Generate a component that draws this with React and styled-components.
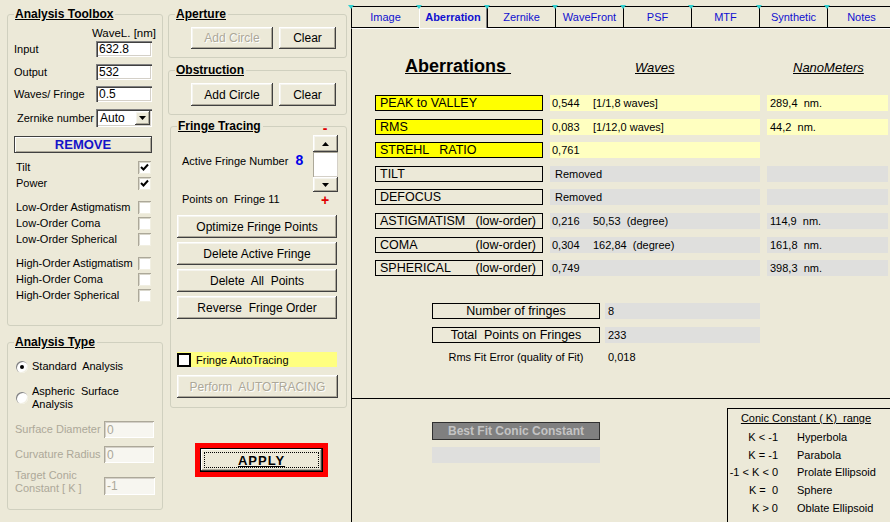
import React from 'react';
import styled, { createGlobalStyle, css } from 'styled-components';

const BG = '#ECE9D8';
const FONT = '"Liberation Sans", Arial, sans-serif';

const sunken = css`
    box-shadow: inset 1px 1px #808080, inset 2px 2px #404040, inset -1px -1px #FFFFFF, inset -2px -2px #D4D0C8;
`;

const raised = css`
    box-shadow: inset -1px -1px #404040, inset 1px 1px #FFFFFF, inset -2px -2px #ACA899, inset 2px 2px #F5F4EE;
`;

const GlobalStyle = createGlobalStyle`
    html, body { margin: 0; padding: 0; background: ${BG}; }
    body { font-family: ${FONT}; font-size: 11px; color: #000; }
    *, *::before, *::after { box-sizing: border-box; }
`;

const toolboxChecks = [
    [['Tilt', true], ['Power', true]],
    [['Low-Order Astigmatism', false], ['Low-Order Coma', false], ['Low-Order Spherical', false]],
    [['High-Order Astigmatism', false], ['High-Order Coma', false], ['High-Order Spherical', false]]
];

const aberrations = [
    { label: 'PEAK to VALLEY', hi: true, wave: '0,544', extra: '[1/1,8 waves]', nm: '289,4  nm.', waveTone: 'yellow', nmTone: 'yellow' },
    { label: 'RMS', hi: true, wave: '0,083', extra: '[1/12,0 waves]', nm: '44,2  nm.', waveTone: 'yellow', nmTone: 'yellow' },
    { label: 'STREHL   RATIO', hi: true, wave: '0,761', waveTone: 'yellow', nmTone: 'none' },
    { label: 'TILT', wave: 'Removed', removed: true, waveTone: 'grey', nmTone: 'grey' },
    { label: 'DEFOCUS', wave: 'Removed', removed: true, waveTone: 'grey', nmTone: 'grey' },
    { label: 'ASTIGMATISM', suffix: '(low-order)', wave: '0,216', extra: '50,53  (degree)', nm: '114,9  nm.', waveTone: 'grey', nmTone: 'grey' },
    { label: 'COMA', suffix: '(low-order)', wave: '0,304', extra: '162,84  (degree)', nm: '161,8  nm.', waveTone: 'grey', nmTone: 'grey' },
    { label: 'SPHERICAL', suffix: '(low-order)', wave: '0,749', nm: '398,3  nm.', waveTone: 'grey', nmTone: 'grey' }
];

const conicRanges = [
    ['K < -1', 'Hyperbola'],
    ['K = -1', 'Parabola'],
    ['-1 < K < 0', 'Prolate Ellipsoid'],
    ['K =  0', 'Sphere'],
    ['K > 0', 'Oblate Ellipsoid']
];

const tabs = ['Image', 'Aberration', 'Zernike', 'WaveFront', 'PSF', 'MTF', 'Synthetic', 'Notes'];

const CheckMark = () => (
    <svg width="9" height="9" viewBox="0 0 9 9">
        <path d="M1 4 L3.5 6.5 L8 1.5" fill="none" stroke="#000" strokeWidth="2" />
    </svg>
);

const Arrow = ({ up }) => (
    <svg width="7" height="4" viewBox="0 0 7 4">
        <path d={up ? 'M0 4 L3.5 0 L7 4 Z' : 'M0 0 L7 0 L3.5 4 Z'} fill="#000" />
    </svg>
);

const App = () => (
    <>
        <GlobalStyle />
        <Screen>
            <LeftColumn>
                <Group $h={312}>
                    <GroupTitle>Analysis Toolbox</GroupTitle>
                    <WaveHeader>WaveL. [nm]</WaveHeader>
                    <FormGrid>
                        <span>Input</span>
                        <TextBox readOnly value="632.8" />
                        <span>Output</span>
                        <TextBox readOnly value="532" />
                        <span>Waves/ Fringe</span>
                        <TextBox readOnly value="0.5" />
                        <FieldLabel $indent={3}>Zernike number</FieldLabel>
                        <Select>
                            <span>Auto</span>
                            <DropButton><Arrow /></DropButton>
                        </Select>
                    </FormGrid>
                    <RemoveButton>REMOVE</RemoveButton>
                    {toolboxChecks.map((set, i) => (
                        <CheckGroup key={i} $mt={i === 0 ? 6 : 8}>
                            {set.map(([name, on]) => (
                                <CheckRow key={name}>
                                    <span>{name}</span>
                                    <CheckBox>{on && <CheckMark />}</CheckBox>
                                </CheckRow>
                            ))}
                        </CheckGroup>
                    ))}
                </Group>

                <Group $h={168} $mt={16}>
                    <GroupTitle>Analysis Type</GroupTitle>
                    <RadioRow $mt={11}>
                        <Radio $on />
                        <span>Standard  Analysis</span>
                    </RadioRow>
                    <RadioRow $mt={12}>
                        <Radio />
                        <span>Aspheric  Surface{'\n'}Analysis</span>
                    </RadioRow>
                    <FieldRow $mt={10}>
                        <Muted>Surface Diameter</Muted>
                        <TextBox readOnly disabled value="0" $w={50} $h={17} />
                    </FieldRow>
                    <FieldRow $mt={8}>
                        <Muted>Curvature Radius</Muted>
                        <TextBox readOnly disabled value="0" $w={50} $h={17} />
                    </FieldRow>
                    <FieldRow $mt={6} $end>
                        <Muted>Target Conic{'\n'}Constant [ K ]</Muted>
                        <TextBox readOnly disabled value="-1" $w={51} $h={18} />
                    </FieldRow>
                </Group>
            </LeftColumn>

            <MiddleColumn>
                <Group $h={44}>
                    <GroupTitle>Aperture</GroupTitle>
                    <ButtonPair $mt={6}>
                        <Button disabled $w={82} $h={22}>Add Circle</Button>
                        <Button $w={57} $h={22}>Clear</Button>
                    </ButtonPair>
                </Group>

                <Group $h={45} $mt={12}>
                    <GroupTitle>Obstruction</GroupTitle>
                    <ButtonPair $mt={6}>
                        <Button $w={82} $h={23}>Add Circle</Button>
                        <Button $w={57} $h={23}>Clear</Button>
                    </ButtonPair>
                </Group>

                <Group $h={282} $mt={11} $ml={2}>
                    <TitleRow>
                        <GroupTitle $flat>Fringe Tracing</GroupTitle>
                        <Sign>-</Sign>
                    </TitleRow>
                    <SpinRow>
                        <ActiveLabel>
                            Active Fringe Number
                            <FringeNumber>8</FringeNumber>
                        </ActiveLabel>
                        <Spin>
                            <SpinButton $h={17}><Arrow up /></SpinButton>
                            <SpinField />
                            <SpinButton $h={15}><Arrow /></SpinButton>
                        </Spin>
                    </SpinRow>
                    <PointsRow>
                        <span>Points on  Fringe 11</span>
                        <Sign $plus>+</Sign>
                    </PointsRow>
                    <ActionList>
                        <Button $w={160} $h={23}>Optimize Fringe Points</Button>
                        <Button $w={160} $h={23}>Delete Active Fringe</Button>
                        <Button $w={160} $h={23}>Delete  All  Points</Button>
                        <Button $w={160} $h={23}>Reverse  Fringe Order</Button>
                    </ActionList>
                    <AutoRow>
                        <AutoBox />
                        <span>Fringe AutoTracing</span>
                    </AutoRow>
                    <Button disabled $w={161} $h={23} $mt={8}>Perform  AUTOTRACING</Button>
                </Group>

                <ApplyFrame>
                    <ApplyButton>
                        <FocusRing>APPLY</FocusRing>
                    </ApplyButton>
                </ApplyFrame>
            </MiddleColumn>

            <RightPanel>
                <TabStrip>
                    {tabs.map(name => (
                        <Tab key={name} $active={name === 'Aberration'}>{name}</Tab>
                    ))}
                </TabStrip>
                <TabBody>
                    <Upper>
                        <TitleGrid>
                            <Heading>{'Aberrations\u00a0'}</Heading>
                            <ColumnHead $indent={85}>Waves</ColumnHead>
                            <ColumnHead $indent={26}>NanoMeters</ColumnHead>
                        </TitleGrid>
                        <Table>
                            {aberrations.map(row => (
                                <React.Fragment key={row.label}>
                                    <LabelBox $hi={row.hi}>
                                        <span>{row.label}</span>
                                        {row.suffix && <span>{row.suffix}</span>}
                                    </LabelBox>
                                    <Cell $tone={row.waveTone} $indent={row.removed ? 5 : 2}>
                                        <Num>{row.wave}</Num>
                                        {row.extra && <span>{row.extra}</span>}
                                    </Cell>
                                    <Cell $tone={row.nmTone} $indent={3}>
                                        {row.nm && <span>{row.nm}</span>}
                                    </Cell>
                                </React.Fragment>
                            ))}
                        </Table>
                        <Stats>
                            <LabelBox $center>Number of fringes</LabelBox>
                            <Cell $tone="grey" $indent={3}>8</Cell>
                            <LabelBox $center>Total  Points on Fringes</LabelBox>
                            <Cell $tone="grey" $indent={3}>233</Cell>
                            <FitLabel>Rms Fit Error (quality of Fit)</FitLabel>
                            <Cell $tone="none" $indent={3}>0,018</Cell>
                        </Stats>
                    </Upper>
                    <Lower>
                        <ConicFit>
                            <BestFitButton>Best Fit Conic Constant</BestFitButton>
                            <GreyBar />
                        </ConicFit>
                        <ConicLegend>
                            <LegendTitle>Conic Constant ( K)  range</LegendTitle>
                            <LegendGrid>
                                {conicRanges.map(([range, name]) => (
                                    <React.Fragment key={name}>
                                        <RangeText>{range}</RangeText>
                                        <span>{name}</span>
                                    </React.Fragment>
                                ))}
                            </LegendGrid>
                        </ConicLegend>
                    </Lower>
                </TabBody>
            </RightPanel>
        </Screen>
    </>
);

export default App;

const Screen = styled.div`
    display: flex;
    width: 890px;
    height: 522px;
    overflow: hidden;
    background: ${BG};
`;

const LeftColumn = styled.div`
    flex: 0 0 165px;
    display: flex;
    flex-direction: column;
    padding: 14px 2px 0 7px;
`;

const MiddleColumn = styled.div`
    flex: 0 0 186px;
    display: flex;
    flex-direction: column;
    padding: 14px 4px 0 3px;
`;

const Group = styled.div`
    display: flex;
    flex-direction: column;
    flex-shrink: 0;
    height: ${p => p.$h}px;
    margin-top: ${p => p.$mt || 0}px;
    margin-left: ${p => p.$ml || 0}px;
    padding: 0 6px;
    border: 1px solid #D0D0BF;
    border-radius: 3px;
`;

const GroupTitle = styled.div`
    align-self: flex-start;
    margin-top: ${p => (p.$flat ? 0 : -8)}px;
    padding: 0 2px 0 1px;
    background: ${BG};
    font: bold 12px/14px ${FONT};
    text-decoration: underline;
`;

const WaveHeader = styled.div`
    margin-top: 6px;
    line-height: 12px;
    text-align: right;
    font-size: 11.5px;
`;

const FormGrid = styled.div`
    display: grid;
    grid-template-columns: 82px 56px;
    grid-template-rows: 16px 16px 16px 18px;
    row-gap: 6.5px;
    align-items: center;
    margin-top: 2px;
`;

const FieldLabel = styled.span`
    padding-left: ${p => p.$indent || 0}px;
`;

const TextBox = styled.input`
    width: ${p => p.$w || 56}px;
    height: ${p => p.$h || 16}px;
    margin: 0;
    padding: 0 0 0 3px;
    border: none;
    outline: none;
    background: #FFFFFF;
    font: 12px ${FONT};
    color: #000;
    ${sunken};

    &:disabled {
        background: #F7F6F0;
        color: #ACA899;
        box-shadow: inset 1px 1px #ACA899, inset -1px -1px #FFFFFF, inset 2px 2px #D4D0C8;
    }
`;

const Select = styled.div`
    display: flex;
    align-items: center;
    justify-content: space-between;
    width: 56px;
    height: 18px;
    padding: 2px 2px 2px 4px;
    background: #FFFFFF;
    font-size: 12px;
    ${sunken};
`;

const DropButton = styled.span`
    display: flex;
    align-items: center;
    justify-content: center;
    width: 15px;
    height: 14px;
    background: ${BG};
    ${raised};
`;

const RemoveButton = styled.button`
    width: 138px;
    height: 17px;
    margin-top: 9.5px;
    padding: 0;
    border: 1px solid #404040;
    background: ${BG};
    box-shadow: inset 1px 1px #FFFFFF, inset -1px -1px #ACA899;
    font: bold 13px/15px ${FONT};
    color: #1414C8;
`;

const CheckGroup = styled.div`
    display: flex;
    flex-direction: column;
    margin-top: ${p => p.$mt}px;
`;

const CheckRow = styled.div`
    display: flex;
    align-items: center;
    justify-content: space-between;
    height: 16px;
    padding: 0 5px 0 2px;
    white-space: pre;
`;

const CheckBox = styled.span`
    display: flex;
    align-items: center;
    justify-content: center;
    width: 13px;
    height: 13px;
    background: #FFFFFF;
    box-shadow: inset 1px 1px #ACA899, inset -1px -1px #F1EFE2, inset 2px 2px #D8D6CB;
`;

const RadioRow = styled.div`
    display: flex;
    align-items: center;
    gap: 4px;
    margin-top: ${p => p.$mt}px;
    padding-left: 2px;
    font-size: 11px;
    line-height: 13px;
    white-space: pre;
`;

const Radio = styled.span`
    position: relative;
    flex: 0 0 12px;
    height: 12px;
    border-radius: 50%;
    background: #FFFFFF;
    box-shadow: inset 1px 1px #808080, inset -1px -1px #F1EFE2;

    ${p => p.$on && css`
        &::after {
            content: '';
            position: absolute;
            left: 4px;
            top: 4px;
            width: 4px;
            height: 4px;
            border-radius: 50%;
            background: #000;
        }
    `}
`;

const FieldRow = styled.div`
    display: grid;
    grid-template-columns: 89px 51px;
    align-items: ${p => (p.$end ? 'end' : 'center')};
    margin-top: ${p => p.$mt}px;
    padding-left: 1px;
`;

const Muted = styled.span`
    color: #ACA899;
    line-height: 13px;
    white-space: pre;
`;

const ButtonPair = styled.div`
    display: flex;
    gap: 6px;
    margin-top: ${p => p.$mt}px;
    padding-left: 16px;
`;

const Button = styled.button`
    flex-shrink: 0;
    width: ${p => p.$w}px;
    height: ${p => p.$h}px;
    margin: ${p => p.$mt || 0}px 0 0;
    padding: 0;
    border: none;
    background: ${BG};
    font: 12px ${FONT};
    color: #000;
    white-space: pre;
    ${raised};

    &:disabled {
        color: #ACA899;
        text-shadow: 1px 1px #FFFFFF;
    }
`;

const TitleRow = styled.div`
    display: flex;
    align-items: center;
    justify-content: space-between;
    height: 14px;
    margin-top: -8px;
`;

const Sign = styled.span`
    width: 10px;
    margin-right: 10px;
    text-align: center;
    color: #E00000;
    font: bold 14px/12px ${FONT};
    margin-top: ${p => (p.$plus ? 2 : 4)}px;
`;

const SpinRow = styled.div`
    display: flex;
    margin-top: 2px;
`;

const ActiveLabel = styled.div`
    padding: 17px 0 0 5px;
    line-height: 12px;
`;

const FringeNumber = styled.span`
    margin-left: 7px;
    font: bold 14px ${FONT};
    color: #0000E8;
`;

const Spin = styled.div`
    display: flex;
    flex-direction: column;
    width: 25px;
    margin: 0 2px 0 auto;
`;

const SpinButton = styled.span`
    display: flex;
    align-items: center;
    justify-content: center;
    height: ${p => p.$h}px;
    background: ${BG};
    ${raised};
`;

const SpinField = styled.span`
    height: 25px;
    background: #FFFFFF;
    box-shadow: inset 1px 1px #ACA899, inset -1px -1px #D4D0C8;
`;

const PointsRow = styled.div`
    display: flex;
    align-items: center;
    justify-content: space-between;
    height: 13px;
    padding-left: 5px;
    white-space: pre;
`;

const ActionList = styled.div`
    display: flex;
    flex-direction: column;
    gap: 4px;
    margin-top: 10px;
`;

const AutoRow = styled.div`
    display: flex;
    align-items: center;
    gap: 5px;
    width: 160px;
    height: 15px;
    margin-top: 33px;
    background: #FFFF80;
`;

const AutoBox = styled.span`
    width: 14px;
    height: 14px;
    border: 2px solid #000;
    background: #FFFFFF;
`;

const ApplyFrame = styled.div`
    width: 133px;
    height: 34px;
    margin: 35px 0 0 27px;
    padding: 5px;
    background: #FF0000;
`;

const ApplyButton = styled.button`
    display: flex;
    width: 100%;
    height: 100%;
    padding: 3px;
    border: 1px solid #000;
    background: ${BG};
    box-shadow: inset -1px -1px #404040, inset 1px 1px #FFFFFF, inset -2px -2px #ACA899;
`;

const FocusRing = styled.span`
    display: flex;
    flex: 1;
    align-items: center;
    justify-content: center;
    border: 1px dotted #000;
    font: bold 13px ${FONT};
    letter-spacing: 1px;
    text-decoration: underline;
`;

const RightPanel = styled.div`
    display: flex;
    flex-direction: column;
    flex: 1;
    min-width: 0;
`;

const TabStrip = styled.div`
    display: flex;
    height: 28px;
    padding-top: 6px;
`;

const Tab = styled.div`
    position: relative;
    flex: 0 0 68px;
    height: 22px;
    border-top: 1px solid #000;
    border-left: 1px solid ${p => (p.$active ? '#FFFFFF' : '#000')};
    border-right: ${p => (p.$active ? '1px solid #808080' : 'none')};
    border-bottom: ${p => (p.$active ? 'none' : '1px solid #000')};
    background: ${BG};
    color: #1010D0;
    font: ${p => (p.$active ? 'bold' : 'normal')} 11px/20px ${FONT};
    text-align: center;

    &::before {
        content: '';
        position: absolute;
        top: -2px;
        left: -4px;
        border-left: 3px solid transparent;
        border-right: 3px solid transparent;
        border-top: 4px solid #30D0D0;
    }
`;

const TabBody = styled.div`
    display: flex;
    flex-direction: column;
    flex: 1;
    border-left: 1px solid #000;
    border-top: 1px solid #FFFFFF;
`;

const Upper = styled.div`
    flex: 0 0 370px;
    padding: 26px 0 0 23px;
    border-bottom: 1px solid #000;
`;

const columns = css`
    display: grid;
    grid-template-columns: 168px 210px 121px;
    column-gap: 7px;
`;

const TitleGrid = styled.div`
    ${columns};
    height: 22px;
    align-items: center;
`;

const Heading = styled.span`
    padding-left: 30px;
    font: bold 18px/22px ${FONT};
    text-decoration: underline;
    white-space: pre;
`;

const ColumnHead = styled.span`
    padding-left: ${p => p.$indent}px;
    font: italic 13px ${FONT};
    text-decoration: underline;
    margin-top: 2px;
`;

const Table = styled.div`
    ${columns};
    grid-auto-rows: 16px;
    row-gap: 7.6px;
    margin-top: 18px;
`;

const LabelBox = styled.div`
    display: flex;
    align-items: center;
    justify-content: ${p => (p.$center ? 'center' : 'space-between')};
    padding: 0 ${p => (p.$center ? 0 : 6)}px 0 ${p => (p.$center ? 0 : 4)}px;
    border: 1px solid #000;
    background: ${p => (p.$hi ? '#FFFF00' : 'transparent')};
    font: 12.5px/14px ${FONT};
    white-space: pre;
`;

const toneColors = {
    yellow: '#FFFFC0',
    grey: '#DFDFDD',
    none: 'transparent'
};

const Cell = styled.div`
    display: flex;
    align-items: center;
    padding-left: ${p => p.$indent}px;
    background: ${p => toneColors[p.$tone]};
    white-space: pre;
`;

const Num = styled.span`
    flex: 0 0 41px;
    white-space: pre;
`;

const Stats = styled.div`
    display: grid;
    grid-template-columns: 168px 155px;
    grid-template-rows: 16px 16px 12px;
    column-gap: 5px;
    row-gap: 8px;
    margin: 27px 0 0 57px;
`;

const FitLabel = styled.div`
    text-align: center;
    line-height: 12px;
`;

const Lower = styled.div`
    display: flex;
    flex: 1;
    padding-left: 80px;
`;

const ConicFit = styled.div`
    display: flex;
    flex-direction: column;
    flex: 0 0 168px;
    margin-top: 23px;
`;

const BestFitButton = styled.div`
    height: 18px;
    border: 1px solid #303030;
    background: #808080;
    color: #C4C4C4;
    font: bold 12px/16px ${FONT};
    text-align: center;
`;

const GreyBar = styled.div`
    height: 16px;
    margin-top: 7px;
    background: #DFDFDD;
`;

const ConicLegend = styled.div`
    flex: 0 0 170px;
    height: 140px;
    margin: 9px 0 0 127px;
    padding-top: 3px;
    border: 1px solid #000;
`;

const LegendTitle = styled.div`
    padding-right: 12px;
    line-height: 12px;
    text-align: center;
    text-decoration: underline;
    white-space: pre;
`;

const LegendGrid = styled.div`
    display: grid;
    grid-template-columns: 50px auto;
    grid-auto-rows: 17.75px;
    column-gap: 19px;
    align-items: center;
    margin-top: 4px;
    white-space: pre;
`;

const RangeText = styled.span`
    text-align: right;
`;
